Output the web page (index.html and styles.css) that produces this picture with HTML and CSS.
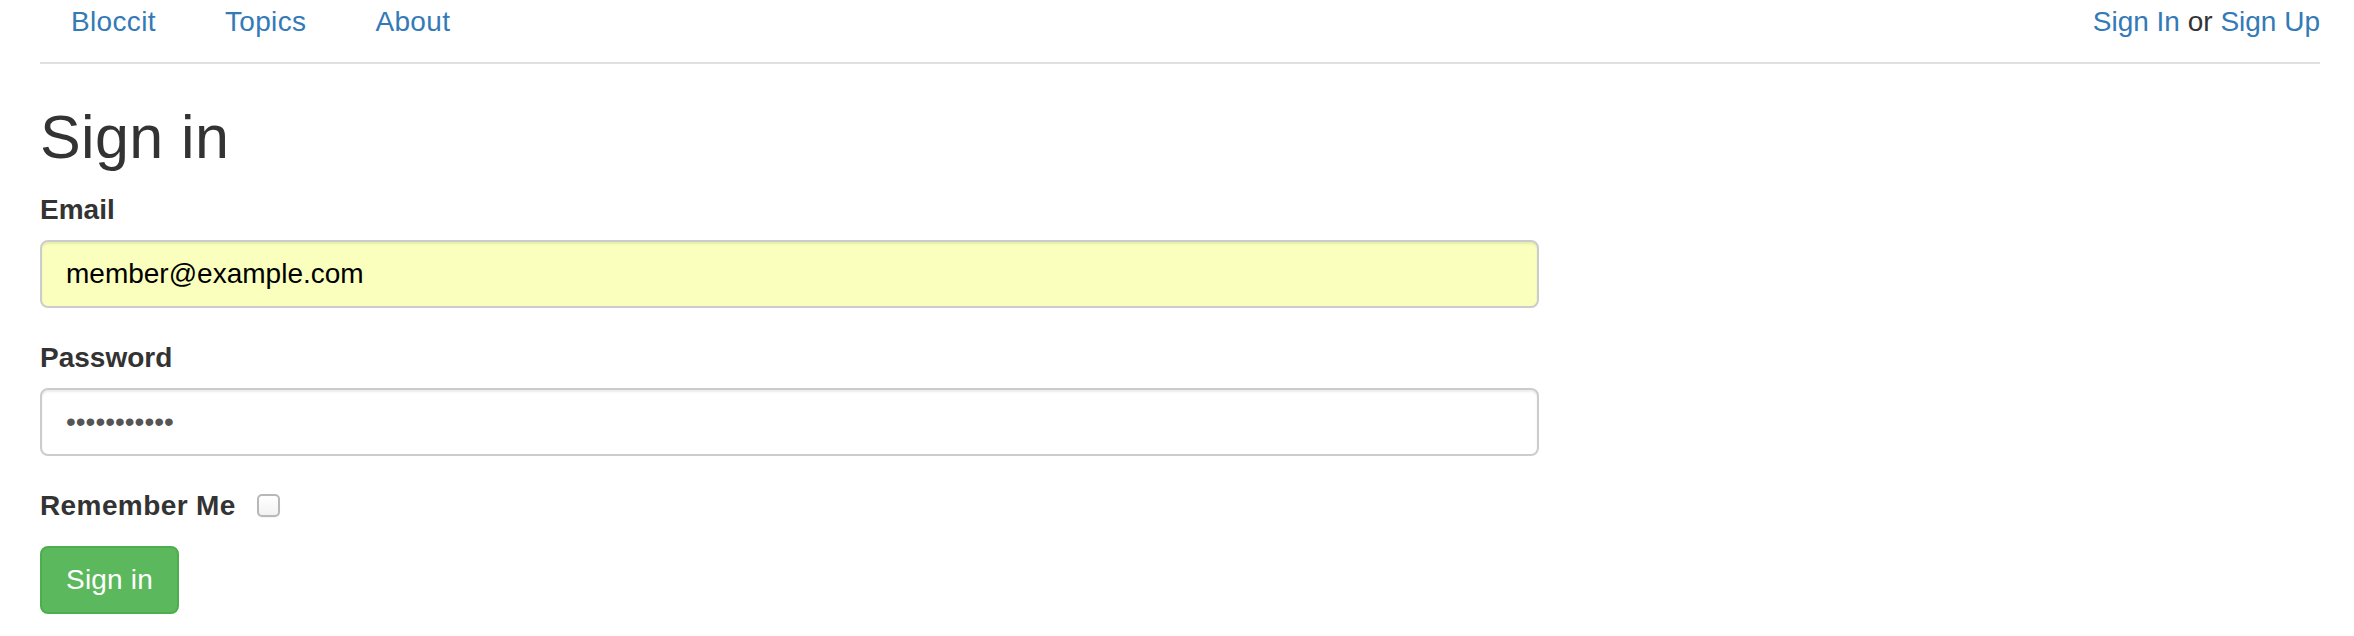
FILE: index.html
```html
<!DOCTYPE html>
<html>
<head>
<meta charset="utf-8">
<title>Bloccit - Sign in</title>
<link rel="stylesheet" href="styles.css">
</head>
<body>
<div class="page">
  <header class="topbar">
    <ul class="nav">
      <li><a href="#">Bloccit</a></li>
      <li><a href="#">Topics</a></li>
      <li><a href="#">About</a></li>
    </ul>
    <div class="user-links">
      <a href="#">Sign In</a> or <a href="#">Sign Up</a>
    </div>
  </header>
  <hr class="divider">
  <h2 class="title">Sign in</h2>
  <form class="signin-form">
    <div class="form-group">
      <label class="field-label" for="email">Email</label>
      <input class="form-control autofilled" id="email" type="email" value="member@example.com">
    </div>
    <div class="form-group">
      <label class="field-label" for="password">Password</label>
      <input class="form-control password" id="password" type="password" value="helloworld1">
    </div>
    <div class="form-group remember">
      <label class="field-label remember-label" for="remember">Remember Me</label>
      <span class="checkbox" id="remember"></span>
    </div>
    <button class="btn-success" type="button">Sign in</button>
  </form>
</div>
</body>
</html>
```

FILE: styles.css
```css
html, body {
  margin: 0;
  padding: 0;
  background: #ffffff;
}

body {
  font-family: "Liberation Sans", Arial, sans-serif;
  font-size: 28px;
  line-height: 40px;
  color: #333333;
}

a {
  color: #337ab7;
  text-decoration: none;
}

.page {
  padding: 2px 34px 0 40px;
}

.topbar {
  display: flex;
  justify-content: space-between;
  align-items: flex-start;
  height: 40px;
}

.nav {
  list-style: none;
  margin: 0;
  padding: 0;
  display: flex;
  gap: 8px;
}

.nav a {
  display: block;
  padding: 0 30px 0 31px;
  letter-spacing: 0.35px;
}

.user-links {
  color: #333333;
}

.divider {
  border: 0;
  border-top: 2px solid #e0e0e0;
  margin: 20px 0 0 0;
  height: 0;
}

.title {
  font-size: 61px;
  font-weight: normal;
  line-height: 66px;
  letter-spacing: 0.4px;
  margin: 40px 0 20px 0;
  color: #333333;
}

.signin-form {
  width: 1499px;
}

.form-group {
  margin-bottom: 30px;
}

.field-label {
  display: inline-block;
  font-weight: bold;
  margin-bottom: 10px;
  color: #333333;
}

.form-control {
  display: block;
  box-sizing: border-box;
  width: 100%;
  height: 68px;
  padding: 12px 24px;
  font-family: "Liberation Sans", Arial, sans-serif;
  font-size: 28px;
  line-height: 40px;
  border: 2px solid #cccccc;
  border-radius: 8px;
  box-shadow: inset 0 2px 2px rgba(0, 0, 0, 0.075);
  outline: none;
  margin: 0;
}

.autofilled {
  background: #faffbd;
  color: #000000;
}

.password {
  background: #ffffff;
  color: #555555;
}

.remember {
  display: flex;
  align-items: center;
  gap: 21px;
  margin-bottom: 20px;
}

.remember .field-label {
  margin-bottom: 0;
}

.remember-label {
  letter-spacing: 0.4px;
}

.checkbox {
  display: block;
  box-sizing: border-box;
  width: 23px;
  height: 23px;
  margin-top: -2px;
  border: 2px solid #b8b8b8;
  border-radius: 5px;
  background: linear-gradient(#ffffff, #f2f2f2);
  box-shadow: 0 1px 1px rgba(0, 0, 0, 0.05);
}

.btn-success {
  display: block;
  height: 68px;
  padding: 12px 24px;
  font-family: "Liberation Sans", Arial, sans-serif;
  font-size: 28px;
  line-height: 40px;
  color: #ffffff;
  background: #5cb85c;
  border: 2px solid #4cae4c;
  border-radius: 8px;
  letter-spacing: 0.2px;
  cursor: pointer;
}
```
